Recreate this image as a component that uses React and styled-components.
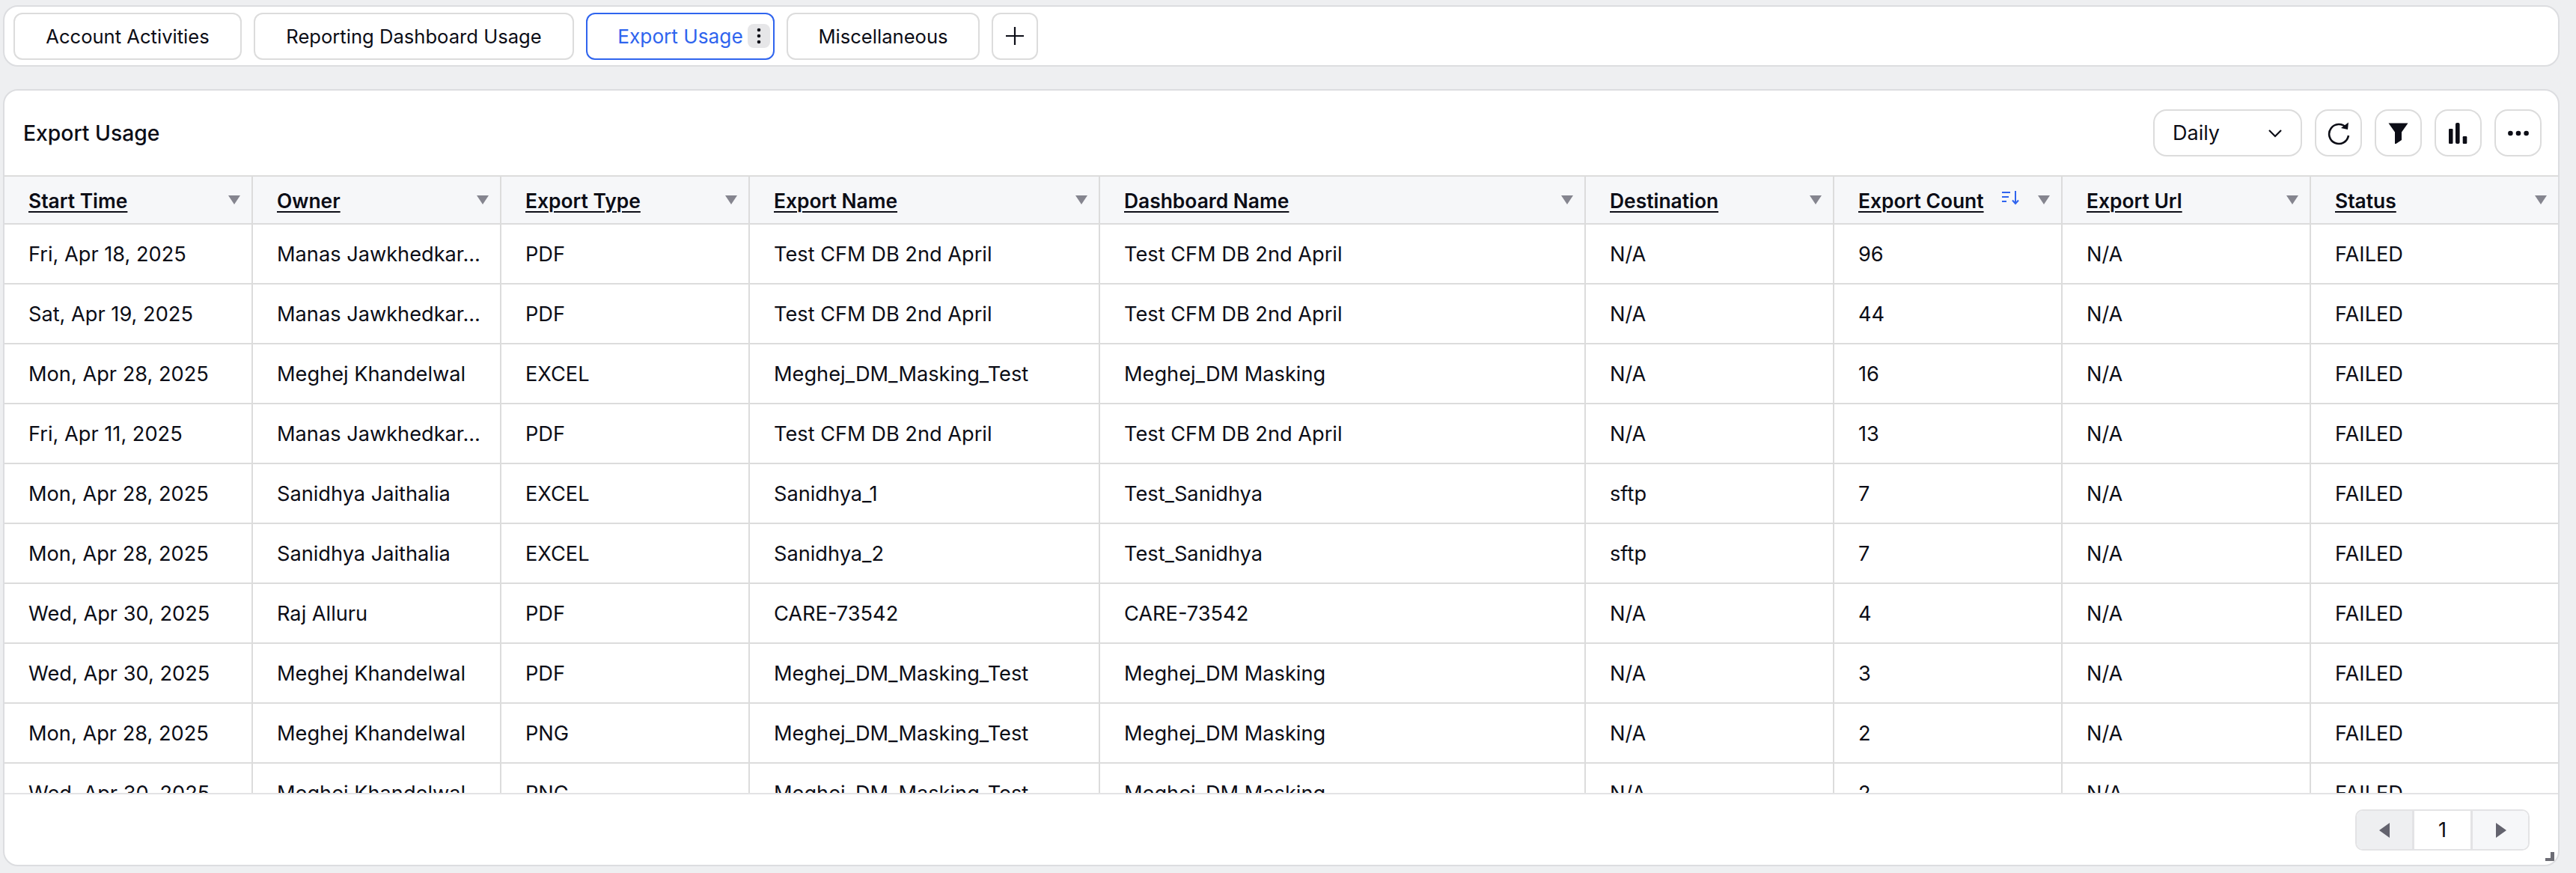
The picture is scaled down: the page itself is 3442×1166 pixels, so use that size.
import React from "react";
import styled, { createGlobalStyle } from "styled-components";

const Global = createGlobalStyle`
  html, body { margin: 0; padding: 0; background: #eeeff1; }
  body { font-family: Inter, "Liberation Sans", sans-serif; color: #0c0d16; -webkit-font-smoothing: antialiased; }
  * { box-sizing: border-box; }
`;

const Page = styled.div`
  position: relative;
  width: 3442px;
  height: 1166px;
  overflow: hidden;
  padding: 7px 22px 9px 4px;
  background: #eeeff1;
`;

const TabBar = styled.div`
  display: flex;
  align-items: center;
  gap: 16px;
  height: 82px;
  padding: 0 12px;
  background: #fff;
  border: 2px solid #dcdde0;
  border-radius: 20px;
`;

const Tab = styled.button`
  position: relative;
  display: flex;
  align-items: center;
  justify-content: center;
  height: 63px;
  width: ${(p) => p.$w}px;
  padding: 0;
  background: #fff;
  border: ${(p) => (p.$active ? "2.5px solid #2f64ee" : "2px solid #dcdcdc")};
  border-radius: 12px;
  font: 400 ${(p) => (p.$active ? "26.2px" : "25.6px")} Inter, sans-serif;
  color: ${(p) => (p.$active ? "#2f64ee" : "#0c0d16")};
`;

const TabMenu = styled.span`
  position: absolute;
  right: 4px;
  top: 13px;
  width: 30px;
  height: 32px;
  display: flex;
  align-items: center;
  justify-content: center;
  background: #e6e6e8;
  border-radius: 8px;
`;

const Card = styled.div`
  position: relative;
  height: 1038px;
  margin-top: 30px;
  background: #fff;
  border: 2px solid #dcdde0;
  border-radius: 20px;
  overflow: hidden;
`;

const CardHead = styled.div`
  position: relative;
  height: 113px;
  display: flex;
  align-items: center;
  padding-left: 25px;
`;

const Title = styled.div`
  font-size: 28.3px;
  font-weight: 500;
  color: #0c0d16;
`;

const Controls = styled.div`
  position: absolute;
  right: 22px;
  top: 25px;
  display: flex;
  gap: 17px;
`;

const Select = styled.div`
  width: 199px;
  height: 63px;
  display: flex;
  align-items: center;
  justify-content: space-between;
  padding: 0 24px 0 24px;
  border: 2px solid #dcdcdc;
  border-radius: 18px;
  font-size: 27px;
`;

const IconBtn = styled.div`
  width: 63px;
  height: 63px;
  display: flex;
  align-items: center;
  justify-content: center;
  border: 2px solid #dcdcdc;
  border-radius: 18px;
`;

const Table = styled.div`
  height: 827px;
  overflow: hidden;
  border-top: 2px solid #dcdcdc;
  border-bottom: 2px solid #e3e3e5;
`;

const COLS = "332px 332px 332px 468px 649px 332px 305px 332px 1fr";

const HeadRow = styled.div`
  display: grid;
  grid-template-columns: ${COLS};
  height: 64px;
  background: #f6f7f9;
  border-bottom: 2px solid #dcdcdc;
`;

const HeadCell = styled.div`
  position: relative;
  display: flex;
  align-items: center;
  padding: 1px 0 0 32px;
  border-right: ${(p) => (p.$last ? "none" : "2px solid #dcdcdc")};
  font-size: 26.4px;
  font-weight: 560;
  text-decoration: underline;
  text-underline-offset: 4px;
  text-decoration-thickness: 2px;
  color: #0c0d16;
`;

const Arrow = styled.span`
  position: absolute;
  right: 15px;
  top: 25px;
  width: 0;
  height: 0;
  border-left: 8.5px solid transparent;
  border-right: 8.5px solid transparent;
  border-top: 12px solid #85858f;
`;

const SortMark = styled.svg`
  position: absolute;
  right: 54px;
  top: 17px;
`;

const Row = styled.div`
  display: grid;
  grid-template-columns: ${COLS};
  height: 80px;
  border-bottom: 2px solid #dcdcdc;
`;

const Cell = styled.div`
  display: block;
  padding: 0 0 0 32px;
  line-height: 79px;
  font-size: 27.2px;
  white-space: nowrap;
  overflow: hidden;
  color: #0c0d16;
  border-right: ${(p) => (p.$last ? "none" : "2px solid #dcdcdc")};
`;

const Pager = styled.div`
  position: absolute;
  right: 38px;
  bottom: 19px;
  width: 233px;
  height: 55px;
  display: flex;
  border: 2px solid #e3e3e5;
  border-radius: 10px;
  overflow: hidden;
`;

const PageBtn = styled.div`
  width: ${(p) => p.$w}px;
  display: flex;
  align-items: center;
  justify-content: center;
  background: ${(p) => p.$bg};
`;

const PageNum = styled.div`
  flex: 1;
  display: flex;
  align-items: center;
  justify-content: center;
  font-size: 27.2px;
  border-left: 3px solid #e3e3e5;
  border-right: 3px solid #e3e3e5;
`;

const Grip = styled.svg`
  position: absolute;
  right: 5px;
  bottom: 5px;
`;

const heads = ["Start Time", "Owner", "Export Type", "Export Name", "Dashboard Name", "Destination", "Export Count", "Export Url", "Status"];
const M = "Manas Jawkhedkar...";
const rows = [
  ["Fri, Apr 18, 2025", M, "PDF", "Test CFM DB 2nd April", "Test CFM DB 2nd April", "N/A", "96"],
  ["Sat, Apr 19, 2025", M, "PDF", "Test CFM DB 2nd April", "Test CFM DB 2nd April", "N/A", "44"],
  ["Mon, Apr 28, 2025", "Meghej Khandelwal", "EXCEL", "Meghej_DM_Masking_Test", "Meghej_DM Masking", "N/A", "16"],
  ["Fri, Apr 11, 2025", M, "PDF", "Test CFM DB 2nd April", "Test CFM DB 2nd April", "N/A", "13"],
  ["Mon, Apr 28, 2025", "Sanidhya Jaithalia", "EXCEL", "Sanidhya_1", "Test_Sanidhya", "sftp", "7"],
  ["Mon, Apr 28, 2025", "Sanidhya Jaithalia", "EXCEL", "Sanidhya_2", "Test_Sanidhya", "sftp", "7"],
  ["Wed, Apr 30, 2025", "Raj Alluru", "PDF", "CARE-73542", "CARE-73542", "N/A", "4"],
  ["Wed, Apr 30, 2025", "Meghej Khandelwal", "PDF", "Meghej_DM_Masking_Test", "Meghej_DM Masking", "N/A", "3"],
  ["Mon, Apr 28, 2025", "Meghej Khandelwal", "PNG", "Meghej_DM_Masking_Test", "Meghej_DM Masking", "N/A", "2"],
  ["Wed, Apr 30, 2025", "Meghej Khandelwal", "PNG", "Meghej_DM_Masking_Test", "Meghej_DM Masking", "N/A", "2"],
];

export default function App() {
  return (
    <Page>
      <Global />
      <TabBar>
        <Tab $w={305}>Account Activities</Tab>
        <Tab $w={428}>Reporting Dashboard Usage</Tab>
        <Tab $w={252} $active>
          Export Usage
          <TabMenu>
            <svg width="6" height="22" viewBox="0 0 6 22"><circle cx="3" cy="3" r="2.3" fill="#0c0d16"/><circle cx="3" cy="11" r="2.3" fill="#0c0d16"/><circle cx="3" cy="19" r="2.3" fill="#0c0d16"/></svg>
          </TabMenu>
        </Tab>
        <Tab $w={258}>Miscellaneous</Tab>
        <Tab $w={62}>
          <svg width="26" height="26" viewBox="0 0 26 26"><path d="M13 1v24M1 13h24" stroke="#0c0d16" strokeWidth="2.2"/></svg>
        </Tab>
      </TabBar>
      <Card>
        <CardHead>
          <Title>Export Usage</Title>
          <Controls>
            <Select>
              Daily
              <svg width="20" height="12" viewBox="0 0 20 12"><path d="M2 2l8 8 8-8" fill="none" stroke="#0c0d16" strokeWidth="2.2"/></svg>
            </Select>
            <IconBtn>
              <svg width="30" height="32" viewBox="0 0 30 32"><path d="M25 8.5A13 13 0 1 0 28 19" fill="none" stroke="#0c0d16" strokeWidth="2.6"/><path d="M28 1.5l-1 9.5-9-2z" fill="#0c0d16"/></svg>
            </IconBtn>
            <IconBtn>
              <svg width="27" height="28" viewBox="0 0 27 28"><path d="M0.5 0.5h26L18 12.5v10.5l-7.5 5H9V12.5z" fill="#0c0d16"/></svg>
            </IconBtn>
            <IconBtn>
              <svg width="25" height="28" viewBox="0 0 25 28"><rect x="0" y="8" width="5.5" height="20" rx="1.2" fill="#0c0d16"/><rect x="9" y="0" width="5.6" height="28" rx="2" fill="#0c0d16"/><rect x="18.7" y="18" width="5.6" height="10" rx="1.2" fill="#0c0d16"/></svg>
            </IconBtn>
            <IconBtn>
              <svg width="28" height="8" viewBox="0 0 28 8"><circle cx="3.4" cy="4" r="3.3" fill="#0c0d16"/><circle cx="14" cy="4" r="3.3" fill="#0c0d16"/><circle cx="24.6" cy="4" r="3.3" fill="#0c0d16"/></svg>
            </IconBtn>
          </Controls>
        </CardHead>
        <Table>
          <HeadRow>
            {heads.map((h, i) => (
              <HeadCell key={h} $last={i === 8}>
                {h}
                {h === "Export Count" && (
                  <SortMark width="26" height="22" viewBox="0 0 26 22">
                    <path d="M1 4h11M1 10h9M1 16h6" stroke="#2f64ee" strokeWidth="2" fill="none"/>
                    <path d="M19 2v17M15 14.5l4 4.5 4-4.5" stroke="#2f64ee" strokeWidth="2" fill="none"/>
                  </SortMark>
                )}
                <Arrow />
              </HeadCell>
            ))}
          </HeadRow>
          {rows.map((r, i) => (
            <Row key={i}>
              {[...r, "N/A", "FAILED"].map((c, j) => (
                <Cell key={j} $last={j === 8}>{c}</Cell>
              ))}
            </Row>
          ))}
        </Table>
        <Pager>
          <PageBtn $w={74} $bg="#eeeff1">
            <svg width="15" height="20" viewBox="0 0 15 20"><path d="M14 0v20L0 10z" fill="#63636e"/></svg>
          </PageBtn>
          <PageNum>1</PageNum>
          <PageBtn $w={74} $bg="#f6f7f9">
            <svg width="15" height="20" viewBox="0 0 15 20"><path d="M1 0v20l14-10z" fill="#63636e"/></svg>
          </PageBtn>
        </Pager>
        <Grip width="12" height="12" viewBox="0 0 12 12"><path d="M7 0h5v12H0V8h7z" fill="#6d6d75"/></Grip>
      </Card>
    </Page>
  );
}
